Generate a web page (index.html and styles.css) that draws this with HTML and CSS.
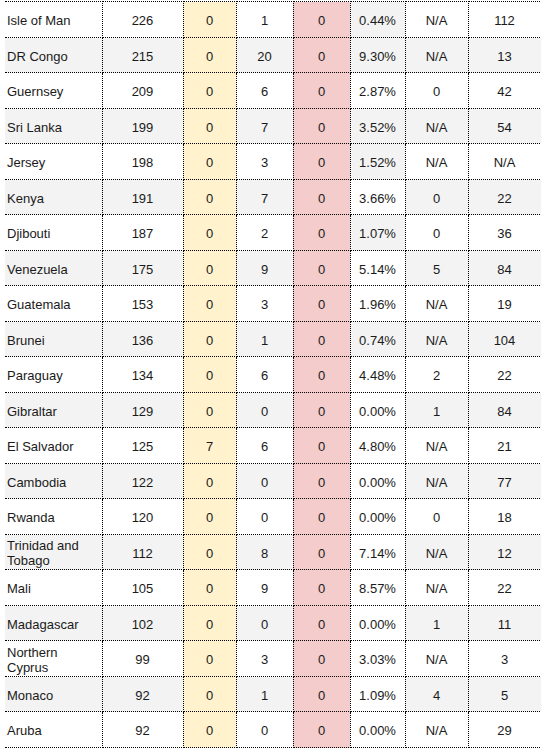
FILE: index.html
```html
<!DOCTYPE html>
<html>
<head>
<meta charset="utf-8">
<link rel="stylesheet" href="styles.css">
</head>
<body>
<table class="stats">
<colgroup>
<col class="c-country"><col class="c-total"><col class="c-new"><col class="c-deaths"><col class="c-newd"><col class="c-pct"><col class="c-rec"><col class="c-last">
</colgroup>
<tbody>
<tr><td class="country">Isle of Man</td><td>226</td><td class="new">0</td><td>1</td><td class="newd">0</td><td class="pct shade">0.44%</td><td>N/A</td><td>112</td></tr>
<tr class="alt"><td class="country">DR Congo</td><td>215</td><td class="new">0</td><td>20</td><td class="newd">0</td><td class="pct shade">9.30%</td><td>N/A</td><td>13</td></tr>
<tr><td class="country">Guernsey</td><td>209</td><td class="new">0</td><td>6</td><td class="newd">0</td><td class="pct">2.87%</td><td>0</td><td>42</td></tr>
<tr class="alt"><td class="country">Sri Lanka</td><td>199</td><td class="new">0</td><td>7</td><td class="newd">0</td><td class="pct shade">3.52%</td><td>N/A</td><td>54</td></tr>
<tr><td class="country">Jersey</td><td>198</td><td class="new">0</td><td>3</td><td class="newd">0</td><td class="pct shade">1.52%</td><td>N/A</td><td>N/A</td></tr>
<tr class="alt"><td class="country">Kenya</td><td>191</td><td class="new">0</td><td>7</td><td class="newd">0</td><td class="pct">3.66%</td><td>0</td><td>22</td></tr>
<tr><td class="country">Djibouti</td><td>187</td><td class="new">0</td><td>2</td><td class="newd">0</td><td class="pct shade">1.07%</td><td>0</td><td>36</td></tr>
<tr class="alt"><td class="country">Venezuela</td><td>175</td><td class="new">0</td><td>9</td><td class="newd">0</td><td class="pct">5.14%</td><td>5</td><td>84</td></tr>
<tr><td class="country">Guatemala</td><td>153</td><td class="new">0</td><td>3</td><td class="newd">0</td><td class="pct">1.96%</td><td>N/A</td><td>19</td></tr>
<tr class="alt"><td class="country">Brunei</td><td>136</td><td class="new">0</td><td>1</td><td class="newd">0</td><td class="pct shade">0.74%</td><td>N/A</td><td>104</td></tr>
<tr><td class="country">Paraguay</td><td>134</td><td class="new">0</td><td>6</td><td class="newd">0</td><td class="pct">4.48%</td><td>2</td><td>22</td></tr>
<tr class="alt"><td class="country">Gibraltar</td><td>129</td><td class="new">0</td><td>0</td><td class="newd">0</td><td class="pct">0.00%</td><td>1</td><td>84</td></tr>
<tr><td class="country">El Salvador</td><td>125</td><td class="new">7</td><td>6</td><td class="newd">0</td><td class="pct">4.80%</td><td>N/A</td><td>21</td></tr>
<tr class="alt"><td class="country">Cambodia</td><td>122</td><td class="new">0</td><td>0</td><td class="newd">0</td><td class="pct">0.00%</td><td>N/A</td><td>77</td></tr>
<tr><td class="country">Rwanda</td><td>120</td><td class="new">0</td><td>0</td><td class="newd">0</td><td class="pct">0.00%</td><td>0</td><td>18</td></tr>
<tr class="alt"><td class="country">Trinidad and Tobago</td><td>112</td><td class="new">0</td><td>8</td><td class="newd">0</td><td class="pct">7.14%</td><td>N/A</td><td>12</td></tr>
<tr><td class="country">Mali</td><td>105</td><td class="new">0</td><td>9</td><td class="newd">0</td><td class="pct">8.57%</td><td>N/A</td><td>22</td></tr>
<tr class="alt"><td class="country">Madagascar</td><td>102</td><td class="new">0</td><td>0</td><td class="newd">0</td><td class="pct">0.00%</td><td>1</td><td>11</td></tr>
<tr><td class="country">Northern Cyprus</td><td>99</td><td class="new">0</td><td>3</td><td class="newd">0</td><td class="pct">3.03%</td><td>N/A</td><td>3</td></tr>
<tr class="alt"><td class="country">Monaco</td><td>92</td><td class="new">0</td><td>1</td><td class="newd">0</td><td class="pct">1.09%</td><td>4</td><td>5</td></tr>
<tr><td class="country">Aruba</td><td>92</td><td class="new">0</td><td>0</td><td class="newd">0</td><td class="pct">0.00%</td><td>N/A</td><td>29</td></tr>
</tbody>
</table>
</body>
</html>
```

FILE: styles.css
```css
html, body {
  margin: 0;
  padding: 0;
  background: #fff;
}

body {
  font-family: "Liberation Sans", Arial, sans-serif;
  font-size: 13px;
  color: #1a1a1a;
}

.stats {
  margin: 1px 0 0 5px;
  border-collapse: collapse;
  table-layout: fixed;
  width: 536px;
}

.c-country { width: 97px; }
.c-total { width: 81px; }
.c-new { width: 53px; }
.c-deaths { width: 57px; }
.c-newd { width: 57px; }
.c-pct { width: 55px; }
.c-rec { width: 63px; }
.c-last { width: 73px; }

.stats td {
  height: 36px;
  padding: 2px 2px 0;
  box-sizing: border-box;
  text-align: center;
  vertical-align: middle;
  line-height: 15px;
  border: 1px dotted #000;
}

.stats tr:nth-child(even) td {
  height: 35px;
}

.stats tr td:first-child {
  border-left: none;
}

.stats td.country {
  text-align: left;
  padding: 2px 6px 0 2px;
}

.stats tr.alt td {
  background: #f3f3f3;
}

.stats td.new,
.stats tr.alt td.new {
  background: #fff2cc;
}

.stats td.newd,
.stats tr.alt td.newd {
  background: #f4cccc;
}

.stats td.pct,
.stats tr.alt td.pct {
  background: #fff;
}

.stats td.pct.shade,
.stats tr.alt td.pct.shade {
  background: #f3f3f3;
}
```
